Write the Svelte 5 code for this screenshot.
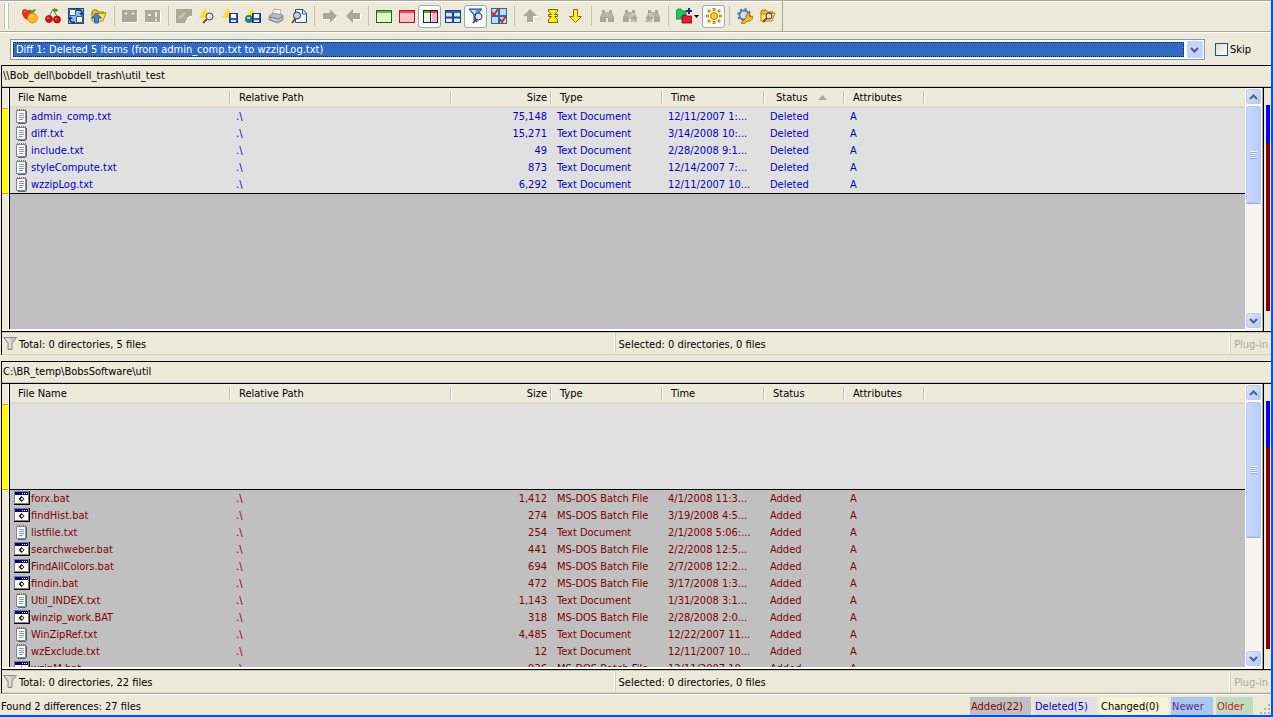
<script lang="ts">
    type FileRow = { name: string; size: string; type: string; time: string };

    const TXT = 'Text Document';
    const BAT = 'MS-DOS Batch File';

    const deleted: FileRow[] = [
        { name: 'admin_comp.txt', size: '75,148', type: TXT, time: '12/11/2007 1:...' },
        { name: 'diff.txt', size: '15,271', type: TXT, time: '3/14/2008 10:...' },
        { name: 'include.txt', size: '49', type: TXT, time: '2/28/2008 9:1...' },
        { name: 'styleCompute.txt', size: '873', type: TXT, time: '12/14/2007 7:...' },
        { name: 'wzzipLog.txt', size: '6,292', type: TXT, time: '12/11/2007 10...' },
    ];

    const added: FileRow[] = [
        { name: 'forx.bat', size: '1,412', type: BAT, time: '4/1/2008 11:3...' },
        { name: 'findHist.bat', size: '274', type: BAT, time: '3/19/2008 4:5...' },
        { name: 'listfile.txt', size: '254', type: TXT, time: '2/1/2008 5:06:...' },
        { name: 'searchweber.bat', size: '441', type: BAT, time: '2/2/2008 12:5...' },
        { name: 'FindAllColors.bat', size: '694', type: BAT, time: '2/7/2008 12:2...' },
        { name: 'findin.bat', size: '472', type: BAT, time: '3/17/2008 1:3...' },
        { name: 'Util_INDEX.txt', size: '1,143', type: TXT, time: '1/31/2008 3:1...' },
        { name: 'winzip_work.BAT', size: '318', type: BAT, time: '2/28/2008 2:0...' },
        { name: 'WinZipRef.txt', size: '4,485', type: TXT, time: '12/22/2007 11...' },
        { name: 'wzExclude.txt', size: '12', type: TXT, time: '12/11/2007 10...' },
        { name: 'wzipM.bat', size: '936', type: BAT, time: '12/11/2007 10...' },
    ];

    const panes = [
        { id: 'left', path: '\\\\Bob_dell\\bobdell_trash\\util_test', thumb: 48, sorted: true, files: deleted, status: 'Deleted', total: 'Total: 0 directories, 5 files' },
        { id: 'right', path: 'C:\\BR_temp\\BobsSoftware\\util', thumb: 55, sorted: false, files: added, status: 'Added', total: 'Total: 0 directories, 22 files' },
    ];

    const columns = ['File Name', 'Relative Path', 'Size', 'Type', 'Time', 'Status', 'Attributes'];

    const legend = [
        { label: 'Added(22)', cls: 'added' },
        { label: 'Deleted(5)', cls: 'deleted' },
        { label: 'Changed(0)', cls: 'changed' },
        { label: 'Newer', cls: 'newer' },
        { label: 'Older', cls: 'older' },
    ];

    const diffCount = 5;
    const totalCount = 27;
    let skip = $state(false);

    const binoculars = '<path d="M3 2h3v2h4V2h3v3l2 4v5H9v-4H7v4H1V9l2-4z" fill="#aca899"/><path d="M7 4v5M9 4v5M4 6v3M12 6v3" stroke="#d0ccbc"/>';
    const folder = '<path d="M1 4l1-2h4l1 2h6v3H1z" fill="#f2c318" stroke="#a87400"/><path d="M1 13V6h2l12-1-3 8z" fill="#ffe468" stroke="#b98a10"/>';
    const disk = '<rect x="7.500" y="5.500" width="8" height="9" fill="#2260b8" stroke="#143c80"/><rect x="9" y="6" width="5" height="4" fill="#fff"/><rect x="9" y="12" width="5" height="2" fill="#d8e4f8"/>';
    const warn = '<path d="M6 0l6 10H0z" fill="#ffdc30"/>';

    // 16x16 toolbar glyphs
    const icons: Record<string, string> = {
        fruit: '<path d="M6 3C1-1-1 4 1 7c1 3 3 5 6 4l4-5c0-3-3-5-5-3z" fill="#e8301c" stroke="#a81c0c" stroke-width=".6"/><circle cx="10.500" cy="10" r="5" fill="#ffb820" stroke="#c26e00" stroke-width=".6"/><path d="M8 5c1-4 4-3 6-4-1 3-2 4-6 4z" fill="#40a828"/><path d="M7 10c1-2 3-3 4-2" stroke="#ffe890" fill="none"/><path d="M2 4l2-1" stroke="#ff9080"/>',
        cherry: '<path d="M8 2C6 4 5 7 4 10M8 2c2 3 4 5 4 8" stroke="#4a8818" fill="none"/><path d="M7 2c2-2 5-2 6 1-2 1-4 1-6-1z" fill="#3c9c20"/><circle cx="4" cy="11" r="3.500" fill="#e01010" stroke="#7c0000" stroke-width=".7"/><circle cx="12" cy="11.500" r="3.500" fill="#e01010" stroke="#7c0000" stroke-width=".7"/><path d="M2 10h2M10 11h2" stroke="#ffb0a0"/>',
        swap: '<rect x=".5" y=".5" width="15" height="15" fill="#8cbcf0" stroke="#1c4c8c"/><path d="M1.500 1.500h6v6h-6zM8.500 8.500h6v6h-6z" fill="#fff" stroke="#2c5c9c"/><path d="M8 2h3l-2-2M9 2c4-1 5 1 5 4" stroke="#103868" fill="none" stroke-width="1.500"/><path d="M11 5h5l-2 3zM5 11H0l2-3z" fill="#103868"/><path d="M2 11c0 3 2 4 5 3" stroke="#103868" fill="none" stroke-width="1.500"/>',
        up: folder + '<path d="M5.500 5l5 5h-3v5h-4v-5h-3z" fill="#3c86e0" stroke="#164a90" stroke-width=".8"/>',
        twodots: '<rect y="2" width="15" height="12" fill="#aca899"/><path d="M3 5h2v1H3zM10 5h2v1h-2z" fill="#ece9d8" stroke="#ece9d8"/><path d="M15.500 3v11.500H1" stroke="#fff" fill="none"/>',
        bang: '<rect y="2" width="15" height="12" fill="#aca899"/><path d="M10 4h2v5h-2zM10 11h2v2h-2zM3 6h3v2H3z" fill="#ece9d8"/><path d="M15.500 3v11.500H1" stroke="#fff" fill="none"/>',
        edit: '<path d="M0 1h16v7c-1 0-3 0-4 1l-3 6H0z" fill="#aca899"/><path d="M2 10c1-4 4-2 6-6l2 1-4 5-3 1" fill="#c8c4b4"/><path d="M9.500 15l3-5.500 3.500-1" stroke="#fff" fill="none"/>',
        find: warn + '<circle cx="10.500" cy="8.500" r="3.500" fill="#dce8f5" stroke="#444"/><path d="M8 11l-4 4" stroke="#a04020" stroke-width="2"/>',
        save1: warn + disk,
        save2: '<path d="M7 0l5 8H2z" fill="#ffdc30"/><circle cx="4" cy="11" r="4" fill="#2c7c74"/><path d="M2 9h3v2H2z" fill="#a8dcdc"/>' + disk,
        print: '<path d="M4 7l2-6 7 1-1 6z" fill="#fff" stroke="#8894a8" stroke-width=".7"/><path d="M1 8l4-3 10 2v5l-5 3-9-3z" fill="#b4bac6" stroke="#707888" stroke-width=".7"/><path d="M1 9l9 2 5-3M3 12l6 2" stroke="#78849a" fill="none"/><path d="M4 11l5 2" stroke="#f8f8ff"/>',
        preview: '<path d="M4.500 1.500H12l3.500 4v9h-11z" fill="#f0f6ff" stroke="#24508c"/><path d="M11.500 1v5H16" stroke="#24508c" fill="none"/><circle cx="6" cy="7.500" r="3.500" fill="#b8d4f4" stroke="#28303c"/><path d="M4 11l-3 4" stroke="#a03828" stroke-width="2"/>',
        next: '<path d="M1 5h7V1l7 7-7 7v-4H1z" fill="#aca899"/><path d="M15.500 8.500l-7 7M1 11.500h6" stroke="#fff"/>',
        prev: '<path d="M15 5H8V1L1 8l7 7v-4h7z" fill="#aca899"/><path d="M8.500 15v-3.500H15.500V6" stroke="#fff" fill="none"/>',
        green: '<rect x=".5" y="2.500" width="15" height="12" fill="#e2fac8" stroke="#286020"/><path d="M1 3h14v2H1z" fill="#68c030"/>',
        red: '<rect x=".5" y="2.500" width="15" height="12" fill="#ffc0c8" stroke="#a02030"/><path d="M1 3h14v2H1z" fill="#f04860"/>',
        split: '<rect x="1.500" y="2.500" width="14" height="12" fill="#fff" stroke="#223"/><path d="M2 3h6v2H2z" fill="#58b028"/><path d="M9 3h6v2H9z" fill="#e83460"/><path d="M2 5h6v9H2z" fill="#ecfae4"/><path d="M10 5h5v9h-5z" fill="#fcb4c4"/><path d="M8.500 3v11" stroke="#223"/>',
        grid: '<rect x=".5" y="2.500" width="15" height="12" fill="#d4e8ff" stroke="#1c3c70"/><path d="M1 3h14v2H1z" fill="#2c68c8"/><path d="M8 4v10M1 9.500h14" stroke="#1c4888" stroke-width="2"/>',
        filter: '<path d="M1 1h13L9 7v7l-3-2V7z" fill="#5c9ce8" stroke="#164880"/><path d="M3 2h5l-1 4z" fill="#c8e2ff"/><circle cx="10.500" cy="8.500" r="3.500" fill="#d8e8f8" stroke="#333"/><path d="M8 11l-3 4" stroke="#883048" stroke-width="2"/>',
        checks: '<rect width="16" height="16" fill="#2468b0"/><path d="M1 1h6v6H1zM9 1h6v6H9zM1 9h6v6H1zM9 9h6v6H9z" fill="#b8dcff"/><path d="M1 4l2 3 4-6M9 11l2 3 4-6" stroke="#e02818" stroke-width="2" fill="none"/>',
        upgray: '<path d="M8 1l7 7h-4v6H5V8H1z" fill="#aca899"/><path d="M15.500 8.500h-4v6H6" stroke="#fff" fill="none"/>',
        center: '<path d="M3.500 1.500h9v2l-3 3h3v2h-3l3 3v3h-9v-3l3-3h-3v-2h3l-3-3z" fill="#fff200" stroke="#6c6400"/>',
        down: '<path d="M5.500 1.500h4v7h4l-6 6-6-6h4z" fill="#fff220" stroke="#7c7000"/>',
        bino: binoculars,
        binonext: binoculars + '<path d="M8 8h3V5l5 5-5 5v-3H8z" fill="#aca899" stroke="#ece9d8" stroke-width=".7"/>',
        binoprev: binoculars + '<path d="M8 8H5V5l-5 5 5 5v-3h3z" fill="#aca899" stroke="#ece9d8" stroke-width=".7"/>',
        folders: '<path d="M0 11V3l2-2h3l1 2h4v8z" fill="#18c860" stroke="#087828" stroke-width=".8"/><path d="M6 15V8l1-1h3l1 1h5v7z" fill="#e81c2c" stroke="#84000c" stroke-width=".8"/><path d="M13 0v6M10 3h6" stroke="#1c28a0" stroke-width="2"/>',
        sun: '<circle cx="8" cy="8" r="3.500" fill="#ffc81c" stroke="#b87800"/><g fill="#ffd83c" stroke="#b07400" stroke-width=".8"><rect x="7" y=".5" width="2" height="2"/><rect x="7" y="13.500" width="2" height="2"/><rect x=".5" y="7" width="2" height="2"/><rect x="13.500" y="7" width="2" height="2"/><rect x="2" y="2" width="2" height="2"/><rect x="12" y="2" width="2" height="2"/><rect x="2" y="12" width="2" height="2"/><rect x="12" y="12" width="2" height="2"/></g>',
        options: '<circle cx="7" cy="7" r="4.500" fill="none" stroke="#5878b0" stroke-width="2"/><circle cx="7" cy="7" r="6" fill="none" stroke="#5878b0" stroke-width="2" stroke-dasharray="2 2.700"/><circle cx="7" cy="7" r="3" fill="#d4e0f4"/><path d="M4 15l5-5c-1-3 1-5 4-5l-1 3 2 1 2-1c0 4-3 6-6 5l-3 3z" fill="#ffb828" stroke="#9c5c00" stroke-width=".8"/>',
        findfolder: folder + '<circle cx="9" cy="8" r="3" fill="#d4e2f5" stroke="#333"/><path d="M7 10l-4 4" stroke="#943c28" stroke-width="2"/>',
    };

    type Tool = { icon: string; label: string; pressed?: boolean; off?: boolean; drop?: boolean };
    const toolGroups: Tool[][] = [
        [{ icon: 'fruit', label: 'Compare files' }, { icon: 'cherry', label: 'Compare directories' }, { icon: 'swap', label: 'Swap' }, { icon: 'up', label: 'Up one level' }],
        [{ icon: 'twodots', label: 'Ignore', off: true }, { icon: 'bang', label: 'Recompare', off: true }],
        [{ icon: 'edit', label: 'Edit', off: true }, { icon: 'find', label: 'View report' }, { icon: 'save1', label: 'Save report' }, { icon: 'save2', label: 'Save as HTML' }, { icon: 'print', label: 'Print' }, { icon: 'preview', label: 'Print preview' }],
        [{ icon: 'next', label: 'Copy right', off: true }, { icon: 'prev', label: 'Copy left', off: true }],
        [{ icon: 'green', label: 'First only' }, { icon: 'red', label: 'Second only' }, { icon: 'split', label: 'Both', pressed: true }, { icon: 'grid', label: 'Tile' }, { icon: 'filter', label: 'Filter', pressed: true }, { icon: 'checks', label: 'Select' }],
        [{ icon: 'upgray', label: 'Previous difference', off: true }, { icon: 'center', label: 'Current difference' }, { icon: 'down', label: 'Next difference' }],
        [{ icon: 'bino', label: 'Find', off: true }, { icon: 'binonext', label: 'Find next', off: true }, { icon: 'binoprev', label: 'Find previous', off: true }],
        [{ icon: 'folders', label: 'Synchronize', drop: true }, { icon: 'sun', label: 'Highlight', pressed: true }],
        [{ icon: 'options', label: 'Options' }, { icon: 'findfolder', label: 'Browse' }],
    ];
</script>

{#snippet chevron(up: boolean)}
    <svg width="9" height="6" viewBox="0 0 9 6" aria-hidden="true">
        <path d={up ? 'M1 5l3.500-3.500L8 5' : 'M1 1l3.500 3.500L8 1'} fill="none" stroke="#4d6185" stroke-width="2" />
    </svg>
{/snippet}

{#snippet fileIcon(type: string)}
    <svg width="16" height="16" viewBox="0 0 16 16" aria-hidden="true">
        {#if type === BAT}
            <rect x="0" y="0" width="16" height="14" fill="#000" />
            <rect x="0" y="0" width="15" height="13" fill="#808080" />
            <rect x="1" y="1" width="13" height="11" fill="#fff" />
            <rect x="1" y="1" width="13" height="3" fill="#000080" />
            <path d="M8 2.500h1M10 2.500h1M12 2.500h1" stroke="#fff" />
            <path d="M7.500 5l3 3-3 3-3-3z" fill="#222" />
            <rect x="7" y="7" width="2" height="2" fill="#e8e060" />
        {:else}
            <path d="M2.500 1.500h9v12h-9z" fill="#fff" stroke="#7488a0" />
            <path d="M12.500 2v11l-1 1.500H4" fill="none" stroke="#5c6470" />
            <path d="M3 1h9" stroke="#907c50" stroke-width="2" stroke-dasharray="1 1" />
            <path d="M5 4.500h5M5 6.500h5M5 8.500h5M5 10.500h4" stroke="#8098c0" />
        {/if}
    </svg>
{/snippet}

<div class="window">
    <div class="toolbar" role="toolbar" aria-label="Main">
        <div class="tools">
            <span class="grip"></span>
            {#each toolGroups as group, i}
                {#if i > 0}<span class="sep"></span>{/if}
                {#each group as tool}
                    <button class:pressed={tool.pressed} class:drop={tool.drop} disabled={tool.off} aria-label={tool.label} title={tool.label}>
                        <svg width="16" height="16" viewBox="0 0 16 16" aria-hidden="true">{@html icons[tool.icon]}</svg>
                        {#if tool.drop}
                            <svg width="5" height="3" viewBox="0 0 5 3" aria-hidden="true"><path d="M0 0h5L2.500 3z" /></svg>
                        {/if}
                    </button>
                {/each}
            {/each}
        </div>
    </div>

    <div class="diff-row">
        <div class="combo">
            <select aria-label="Difference">
                <option>Diff 1: Deleted 5 items (from admin_comp.txt to wzzipLog.txt)</option>
            </select>
            <span class="combo-arrow">{@render chevron(false)}</span>
        </div>
        <label class="skip"><input type="checkbox" bind:checked={skip} />Skip</label>
    </div>

    <main>
        {#each panes as pane}
            <section class="pane {pane.id}">
                <div class="path">{pane.path}</div>
                <div class="body">
                    <div class="gutter"><span class="mark"></span></div>
                    <div class="list">
                        <table>
                            <colgroup>
                                <col class="c-name" /><col class="c-path" /><col class="c-size" /><col class="c-type" />
                                <col class="c-time" /><col class="c-status" /><col class="c-attr" /><col />
                            </colgroup>
                            <thead>
                                <tr>
                                    {#each columns as col}
                                        <th class:num={col === 'Size'} class:sorted={pane.sorted && col === 'Status'}>
                                            {col}{#if pane.sorted && col === 'Status'}<svg width="9" height="5" viewBox="0 0 9 5" aria-hidden="true"><path d="M0 5h9L4.500 0z" fill="#aca899" /></svg>{/if}
                                        </th>
                                    {/each}
                                    <th class="rest"></th>
                                </tr>
                            </thead>
                            <tbody>
                                {#if pane.id === 'right'}
                                    <tr class="filler"><td colspan="8"></td></tr>
                                {/if}
                                {#each pane.files as file}
                                    <tr>
                                        <td class="name"><span>{@render fileIcon(file.type)}{file.name}</span></td>
                                        <td>.\</td>
                                        <td class="num">{file.size}</td>
                                        <td>{file.type}</td>
                                        <td>{file.time}</td>
                                        <td>{pane.status}</td>
                                        <td>A</td>
                                        <td></td>
                                    </tr>
                                {/each}
                            </tbody>
                        </table>
                    </div>
                    <div class="scrollbar">
                        <button aria-label="Scroll up">{@render chevron(true)}</button>
                        <div class="track">
                            <div class="thumb" style="height: {pane.thumb}%"><i></i></div>
                        </div>
                        <button aria-label="Scroll down">{@render chevron(false)}</button>
                    </div>
                    <div class="overview">
                        <span class="del" style="flex-grow: {diffCount}"></span>
                        <span class="add" style="flex-grow: {totalCount - diffCount}"></span>
                    </div>
                </div>
                <div class="summary">
                    <div class="cell">
                        <svg width="14" height="14" viewBox="0 0 14 14" aria-hidden="true">
                            <path d="M.5.500h13L9 6.500v6H5v-6z" fill="#c8c8c8" stroke="#8c8c8c" />
                            <path d="M3 2h3l1 4v5" fill="none" stroke="#f4f4f4" />
                        </svg>
                        <span>{pane.total}</span>
                    </div>
                    <div class="cell"><span>Selected: 0 directories, 0 files</span></div>
                    <div class="cell plugin"><span>Plug-in</span></div>
                </div>
            </section>
        {/each}
    </main>

    <footer>
        <span class="found">Found 2 differences: 27 files</span>
        {#each legend as item}
            <span class="key {item.cls}">{item.label}</span>
        {/each}
        <svg class="size-grip" width="12" height="12" viewBox="0 0 12 12" aria-hidden="true">
            <path d="M9 1h2v2H9zM5 5h2v2H5zM9 5h2v2H9zM1 9h2v2H1zM5 9h2v2H5zM9 9h2v2H9z" fill="#b8b4a2" />
        </svg>
    </footer>
</div>

<style>
    :global(body) {
        margin: 0;
        background: #ece9d8;
    }

    .window {
        box-sizing: border-box;
        height: 100vh;
        display: flex;
        flex-direction: column;
        overflow: hidden;
        border: solid #0a50e0;
        border-width: 0 2px 2px 0;
        background: #ece9d8;
        color: #000;
        font: 11px/14px Tahoma, "DejaVu Sans Condensed", sans-serif;
        cursor: default;
    }

    .toolbar {
        box-sizing: border-box;
        height: 33px;
        flex: none;
        display: flex;
        border-top: 1px solid #aca899;
        border-bottom: 1px solid #fff;
        box-shadow: inset 0 1px #fff, inset 0 -1px #aca899;
    }

    .tools {
        display: flex;
        align-items: center;
        padding: 0 3px 1px 0;
        border-right: 1px solid #aca899;
    }

    .grip {
        width: 3px;
        height: 26px;
        margin: 0 11px 0 4px;
        border: solid #c5c2b2;
        border-width: 0 1px;
        background: #fff;
    }

    .grip + * { margin-left: -2px; }

    .sep {
        width: 1px;
        height: 20px;
        margin: 0 3px 0 4px;
        background: #c5c2b2;
    }

    .tools button {
        box-sizing: border-box;
        width: 23px;
        height: 23px;
        padding: 0;
        border: 1px solid transparent;
        border-radius: 3px;
        background: none;
        display: flex;
        align-items: center;
        justify-content: center;
    }

    .tools button.drop { width: 30px; gap: 2px; }

    .tools button.pressed {
        border-color: #98a8c0;
        background: #fbfbf8;
    }

    .diff-row {
        box-sizing: border-box;
        height: 32px;
        flex: none;
        display: flex;
        align-items: center;
        padding: 1px 20px 0 10px;
    }

    .combo {
        box-sizing: border-box;
        flex: 1;
        height: 21px;
        display: flex;
        gap: 3px;
        padding: 1px;
        border: 1px solid #7f9db9;
        background: #fff;
    }

    select {
        appearance: none;
        flex: 1;
        min-width: 0;
        margin: 1px 0 1px 1px;
        padding: 0 2px;
        border: 1px dotted #102040;
        border-radius: 0;
        background: #316ac5;
        color: #fff;
        font: inherit;
    }

    .combo-arrow {
        width: 16px;
        display: flex;
        align-items: center;
        justify-content: center;
        border-radius: 2px;
        background: #c3d3fb;
    }

    .skip {
        display: flex;
        align-items: center;
        gap: 2px;
        margin-left: 10px;
    }

    .skip input {
        appearance: none;
        box-sizing: border-box;
        width: 13px;
        height: 13px;
        margin: 0;
        border: 1px solid #1c5180;
        background: linear-gradient(135deg, #dcdcd7, #fff);
    }

    .skip input:checked { background: #21a121; }

    main {
        flex: 1;
        min-height: 0;
        display: flex;
        flex-direction: column;
    }

    .pane { display: contents; }

    .path {
        box-sizing: border-box;
        flex: none;
        height: 22px;
        margin-left: 1px;
        padding: 3px 1px 0;
        border: solid #000;
        border-width: 1px 0 0 1px;
        box-shadow: inset 0 -1px #c8c5b4;
    }

    .left .body { flex: 244 1 0; }
    .right .body { flex: 286 1 0; }

    .body {
        box-sizing: border-box;
        min-height: 0;
        margin-left: 1px;
        display: flex;
        border: solid #000;
        border-width: 1px 0 0 1px;
        box-shadow: inset 0 -2px #fff;
    }

    .gutter {
        width: 6px;
        flex: none;
        padding-top: 20px;
        border-right: 1px solid #fff;
    }

    .mark {
        display: block;
        height: 84px;
        border: solid #e8a020;
        border-width: 1px 0;
        background: #ff0;
    }

    .list {
        flex: 1;
        min-width: 0;
        margin-bottom: 2px;
        overflow: hidden;
        border-left: 1px solid #000;
        background: #c0c0c0;
    }

    table {
        width: 100%;
        table-layout: fixed;
        border-collapse: separate;
        border-spacing: 0;
    }

    .c-name,
    .c-path { width: 221px; }
    .c-size { width: 100px; }
    .c-type { width: 111px; }
    .c-time { width: 102px; }
    .c-status,
    .c-attr { width: 80px; }

    th {
        box-sizing: border-box;
        height: 20px;
        padding: 0 5px 0 8px;
        text-align: left;
        font-weight: normal;
        line-height: 14px;
        background:
            linear-gradient(#c5c2b2, #c5c2b2) right 1px top 3px / 1px 13px no-repeat,
            linear-gradient(#fff, #fff) right 0 top 3px / 1px 13px no-repeat,
            linear-gradient(#ebeadb 85%, #d6d2c2);
    }

    th.rest { background: linear-gradient(#ebeadb 85%, #d6d2c2); }

    th.sorted { padding-left: 11px; }
    th.sorted svg { margin-left: 10px; vertical-align: 1px; }

    td {
        height: 17px;
        padding: 0 5px;
        line-height: 17px;
        white-space: nowrap;
        overflow: hidden;
    }

    .num { text-align: right; }

    .name span {
        display: flex;
        align-items: center;
        gap: 1px;
    }

    td.name { padding-left: 4px; }

    .left td {
        background: #e0e0e0;
        color: #0000c8;
    }

    .left tr:last-child td { border-bottom: 1px solid #000; }

    .right td { color: #800000; }

    .right .filler td {
        height: 85px;
        border-bottom: 1px solid #000;
        background: #e0e0e0;
    }

    .scrollbar {
        box-sizing: border-box;
        width: 18px;
        flex: none;
        display: flex;
        flex-direction: column;
        padding-bottom: 2px;
        border-right: 1px solid #aca899;
        background: #f6f5f0;
    }

    .scrollbar button {
        box-sizing: border-box;
        width: 17px;
        height: 17px;
        flex: none;
        padding: 0;
        display: flex;
        align-items: center;
        justify-content: center;
        border: 1px solid #fff;
        border-radius: 3px;
        background: linear-gradient(135deg, #dce6fe, #b4c8f6);
        box-shadow: inset 0 0 0 1px #b8cbf6;
    }

    .track {
        flex: 1;
        min-height: 0;
    }

    .thumb {
        box-sizing: border-box;
        width: 17px;
        display: flex;
        align-items: center;
        justify-content: center;
        border: 1px solid #fff;
        border-bottom-color: #98b0e0;
        border-radius: 3px;
        background: linear-gradient(90deg, #c9d8fc, #b9cbf9);
        box-shadow: inset 0 0 0 1px #b4c8f6;
    }

    .thumb i {
        width: 7px;
        height: 8px;
        background: repeating-linear-gradient(#eef4fe 0 1px, #8cb0f8 1px 2px);
    }

    .overview {
        width: 4px;
        flex: none;
        display: flex;
        flex-direction: column;
        padding: 17px 1px 20px 2px;
        border-left: 1px solid #000;
    }

    .overview .del { background: #00f; }
    .overview .add { background: #800000; }

    .summary {
        box-sizing: border-box;
        height: 24px;
        flex: none;
        display: flex;
        margin-left: 1px;
        border: solid #000;
        border-width: 1px 0 0 1px;
        box-shadow: inset 0 1px #c8c5b4, inset 0 -1px #d8d4c4;
    }

    .left .summary { margin-bottom: 6px; }

    .cell {
        flex: 1;
        display: flex;
        align-items: center;
        gap: 2px;
        padding: 0 3px 0 1px;
        margin: 2px 0;
        border-right: 1px solid #fff;
        box-shadow: 1px 0 #d0ccbc;
    }

    .cell + .cell { padding-left: 4px; }
    .cell span { padding-top: 2px; }

    .cell.plugin {
        flex: none;
        border: 0;
        box-shadow: none;
        color: #aca899;
    }

    footer {
        box-sizing: border-box;
        height: 22px;
        flex: none;
        display: flex;
        align-items: center;
        gap: 3px;
        padding-top: 4px;
        box-shadow: inset 0 1px #aca899, inset 0 2px #fff;
    }

    .found {
        flex: 1;
        padding: 2px 0 0 1px;
    }

    .key {
        box-sizing: border-box;
        height: 18px;
        padding: 3px 1px 1px;
        line-height: 14px;
    }

    .key.added { width: 61px; background: #c0c0c0; color: #800000; }
    .key.deleted { width: 63px; background: #e0e0e0; color: #0000c0; }
    .key.changed { width: 68px; background: #f6f4d0; color: #000; }
    .key.newer { width: 42px; background: #a6caf0; color: #6c1c98; }
    .key.older { width: 37px; background: #c0dcc0; color: #c82020; }

    .size-grip {
        align-self: flex-end;
        margin-left: 3px;
    }
</style>
